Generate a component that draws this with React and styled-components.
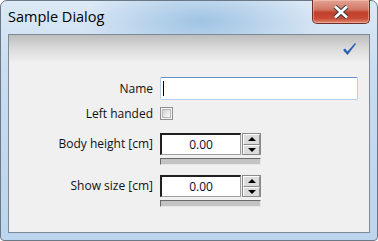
import styled, { createGlobalStyle } from 'styled-components';

const Global = createGlobalStyle`
  html, body { margin: 0; padding: 0; background: #fff; }
  body { width: 378px; height: 241px; overflow: hidden; }
`;

const Window = styled.div`
  width: 378px;
  height: 241px;
  box-sizing: border-box;
  border: 1px solid #6b7886;
  border-radius: 7px 7px 4px 4px;
  background:
    radial-gradient(ellipse 120px 40px at 200px 20px, rgba(150,190,225,0.85), rgba(150,190,225,0) 100%),
    linear-gradient(180deg, #dce9f6 0%, #c9dcf0 30%, #bcd4ee 100%);
  display: flex;
  flex-direction: column;
  font-family: "Open Sans", "Noto Sans", sans-serif;
`;

const TitleBar = styled.div`
  height: 33px;
  display: flex;
  align-items: flex-start;
  justify-content: space-between;
`;

const Title = styled.div`
  font-size: 14.5px;
  color: #000;
  padding: 6px 0 0 7px;
`;

const CloseButton = styled.div`
  width: 58px;
  height: 24px;
  margin: -1px 7px 0 0;
  box-sizing: border-box;
  border: 1px solid #6e2f2a;
  border-top: none;
  border-radius: 0 0 5px 5px;
  background: linear-gradient(180deg, #e4a394 0%, #d27a68 40%, #c0402a 55%, #c94a36 80%, #e08a70 100%);
  box-shadow: inset 0 0 0 1px rgba(255,210,200,0.45);
  display: flex;
  align-items: center;
  justify-content: center;
`;

const Client = styled.div`
  flex: 1;
  margin: 0 7px 7px;
  border: 1px solid #7d8a98;
  background: #f0f0f0;
  display: flex;
  flex-direction: column;
`;

const Toolbar = styled.div`
  height: 27px;
  background: linear-gradient(180deg, #bdbdbd 0%, #d8d8d8 45%, #efefef 100%);
  display: flex;
  align-items: center;
  justify-content: flex-end;
  padding-right: 12px;
`;

const Form = styled.div`
  display: flex;
  flex-direction: column;
  padding-top: 15px;
`;

const Row = styled.div`
  display: grid;
  grid-template-columns: 144px auto;
  column-gap: 7px;
  align-items: ${(p) => p.$align || 'start'};
  margin-top: ${(p) => p.$top || 0}px;
`;

const Label = styled.div`
  font-size: 12px;
  color: #111;
  text-align: right;
  line-height: ${(p) => p.$lh || 22}px;
`;

const TextInput = styled.div`
  width: 198px;
  height: 23px;
  box-sizing: border-box;
  background: #fff;
  border: 1px solid #b3d0ea;
  border-top-color: #5f93c4;
  border-radius: 2px;
  display: flex;
  align-items: center;
  padding-left: 2px;
`;

const Caret = styled.div`
  width: 1px;
  height: 15px;
  background: #000;
`;

const CheckBox = styled.div`
  width: 13px;
  height: 13px;
  box-sizing: border-box;
  border: 1px solid #8f8f8f;
  background: #f4f4f4;
  padding: 1px;
  &::after {
    content: "";
    display: block;
    width: 100%;
    height: 100%;
    box-sizing: border-box;
    border: 1px solid #b8b8b8;
    background: linear-gradient(135deg, #d2d2d2 0%, #e6e6e6 50%, #fafafa 100%);
  }
`;

const SpinBlock = styled.div`
  display: flex;
  flex-direction: column;
  gap: 3px;
  width: 101px;
`;

const SpinRow = styled.div`
  display: flex;
  gap: 1px;
  height: 22px;
`;

const SpinField = styled.div`
  width: 81px;
  box-sizing: border-box;
  background: #fff;
  border-top: 2px solid #202020;
  border-left: 2px solid #202020;
  border-right: 1px solid #a0a0a0;
  border-bottom: 1px solid #a0a0a0;
  font-size: 12px;
  color: #0a0a30;
  display: flex;
  align-items: center;
  justify-content: center;
`;

const SpinButtons = styled.div`
  width: 19px;
  display: flex;
  flex-direction: column;
  border: 1px solid #8a8a8a;
  box-sizing: border-box;
`;

const SpinButton = styled.div`
  flex: 1;
  background: #dcdcdc;
  border-top: 1px solid #fff;
  border-left: 1px solid #fff;
  border-bottom: 1px solid #8a8a8a;
  border-right: 1px solid #8a8a8a;
  display: flex;
  align-items: center;
  justify-content: center;
  &:last-child { border-bottom: none; }
`;

const Arrow = styled.div`
  width: 0;
  height: 0;
  border-left: 4px solid transparent;
  border-right: 4px solid transparent;
  ${(p) => (p.$down ? 'border-top: 4px solid #000;' : 'border-bottom: 4px solid #000;')}
`;

const Progress = styled.div`
  height: 7px;
  box-sizing: border-box;
  background: #c3c3c3;
  border-top: 1px solid #6a6a6a;
  border-left: 1px solid #6a6a6a;
  border-right: 1px solid #e6e6e6;
  border-bottom: 1px solid #e6e6e6;
`;

const Spinner = ({ value }) => (
  <SpinBlock>
    <SpinRow>
      <SpinField>{value}</SpinField>
      <SpinButtons>
        <SpinButton><Arrow /></SpinButton>
        <SpinButton><Arrow $down /></SpinButton>
      </SpinButtons>
    </SpinRow>
    <Progress />
  </SpinBlock>
);

const App = () => (
  <>
    <Global />
    <Window>
      <TitleBar>
        <Title>Sample Dialog</Title>
        <CloseButton>
          <svg width="18" height="14" viewBox="0 0 18 14">
            <path d="M3 1.5 L15 12.5 M15 1.5 L3 12.5" fill="none" stroke="#3a3a3a" strokeWidth="4.6" />
            <path d="M3 1.5 L15 12.5 M15 1.5 L3 12.5" fill="none" stroke="#fff" strokeWidth="2.6" />
          </svg>
        </CloseButton>
      </TitleBar>
      <Client>
        <Toolbar>
          <svg width="15" height="14" viewBox="0 0 15 14">
            <path d="M1 8 L3 6.5 L5.5 9.5 L13 1 L14 2 L5.5 13 Z" fill="#2b5fb3" />
          </svg>
        </Toolbar>
        <Form>
          <Row $align="center">
            <Label>Name</Label>
            <TextInput><Caret /></TextInput>
          </Row>
          <Row $top={7} $align="center">
            <Label $lh={13}>Left handed</Label>
            <CheckBox />
          </Row>
          <Row $top={13}>
            <Label>Body height [cm]</Label>
            <Spinner value="0.00" />
          </Row>
          <Row $top={10}>
            <Label>Show size [cm]</Label>
            <Spinner value="0.00" />
          </Row>
        </Form>
      </Client>
    </Window>
  </>
);

export default App;
